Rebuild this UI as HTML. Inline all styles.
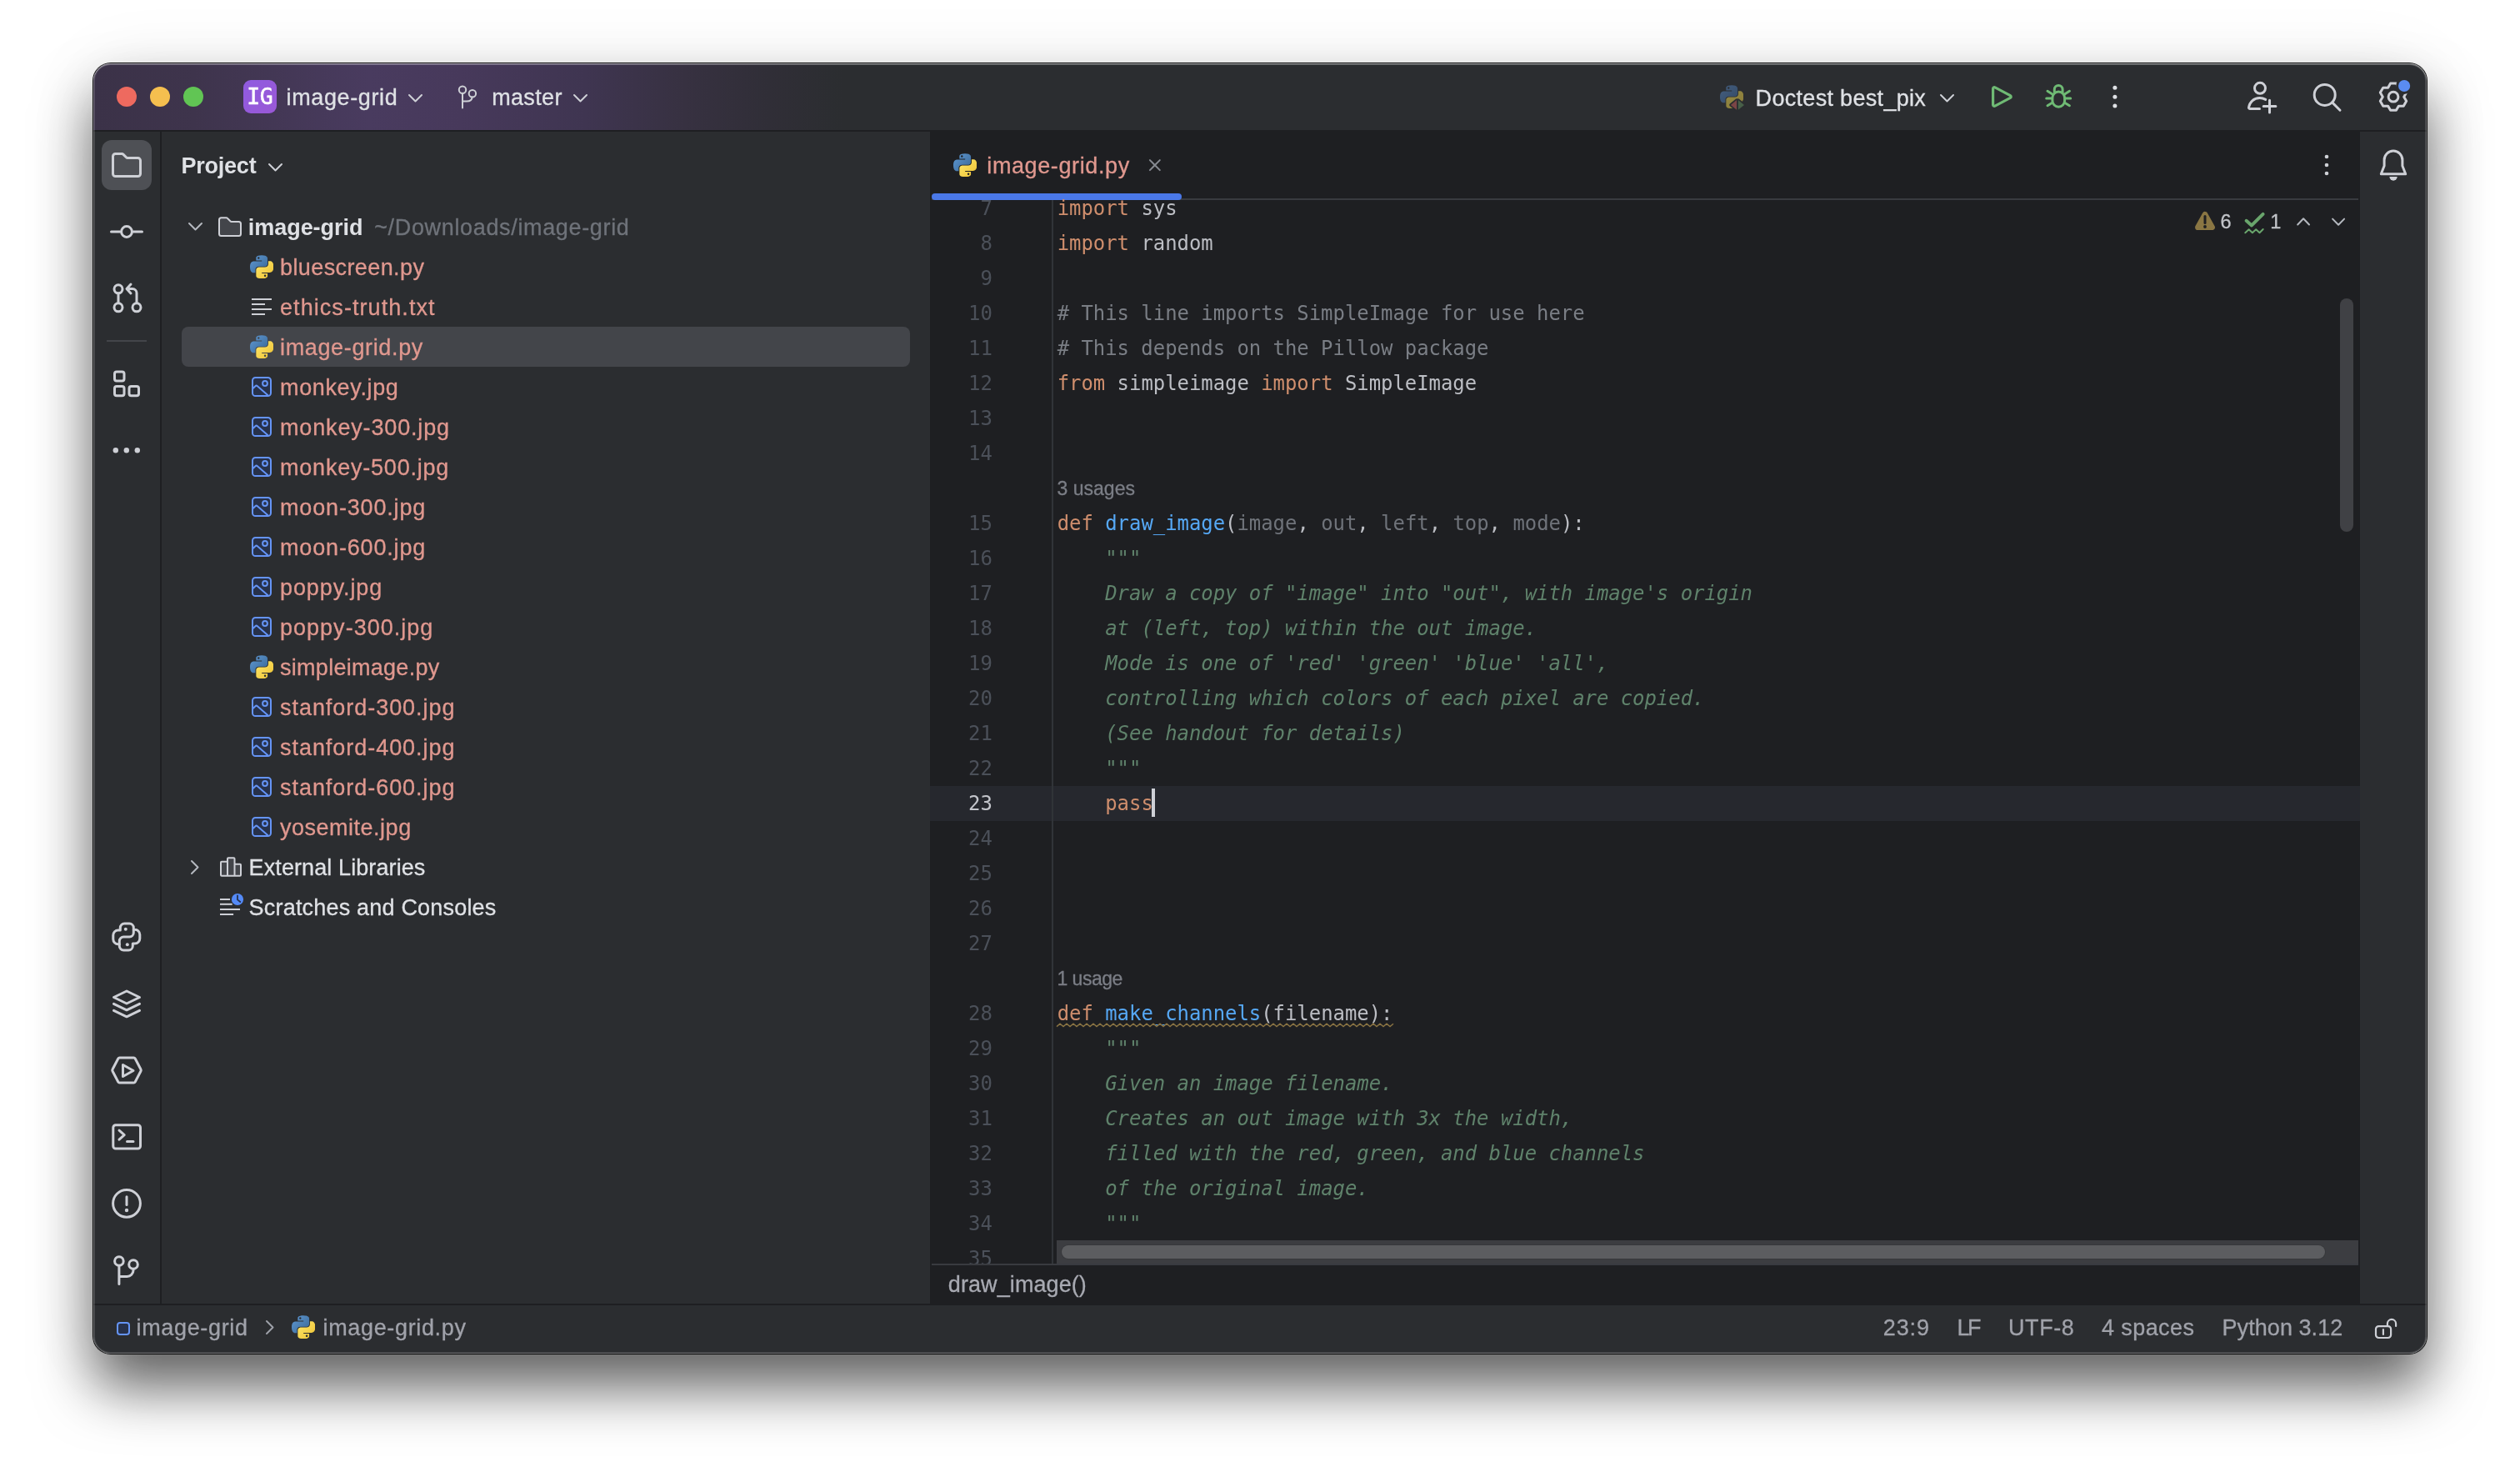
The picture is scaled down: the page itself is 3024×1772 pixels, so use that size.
<!DOCTYPE html>
<html lang="en"><head><meta charset="utf-8"><title>image-grid – image-grid.py</title>
<style>
html,body{margin:0;padding:0;background:#fff;}
body{width:3024px;height:1772px;overflow:hidden;position:relative;font-family:"Liberation Sans",sans-serif;}
#win{position:absolute;left:112px;top:76px;width:2800px;height:1548px;border-radius:21px;overflow:hidden;background:#2b2d30;will-change:transform;}
#shadow{position:absolute;left:112px;top:76px;width:2800px;height:1548px;border-radius:21px;box-shadow:0 0 0 1px rgba(0,0,0,.92),0 41px 68px 0 rgba(0,0,0,.6),0 4px 90px 0 rgba(0,0,0,.07);}
#hl{position:absolute;left:112px;top:76px;width:2800px;height:1548px;border-radius:21px;box-shadow:inset 0 0 0 1px rgba(255,255,255,.25),inset 0 0 0 2px rgba(255,255,255,.09),inset 0 1px 0 0 rgba(255,255,255,.12),inset 0 2px 0 0 rgba(255,255,255,.16);pointer-events:none;}
.t{position:absolute;white-space:pre;line-height:1;-webkit-text-stroke:.3px;}
.cl{position:absolute;white-space:pre;left:1156.7px;height:42px;line-height:42px;font-size:23.9px;font-family:"DejaVu Sans Mono","Liberation Mono",monospace;color:#bcbec4;}
.ln{position:absolute;white-space:pre;left:1005px;width:74px;text-align:right;height:42px;line-height:42px;font-size:24px;font-family:"DejaVu Sans Mono","Liberation Mono",monospace;color:#4b5059;}
.k{color:#cf8e6d}.c{color:#7a7e85}.d{color:#5f826b;font-style:italic}.f{color:#56a8f5}.u{color:#6f737a}
</style></head>
<body>
<div id="shadow"></div>
<div id="win">
<div style="position:absolute;left:0px;top:0px;width:2800px;height:80px;background:linear-gradient(90deg,#3b3248 0px,#3e344c 120px,#493b5f 330px,#47395b 440px,#3f3551 590px,#373141 710px,#302e37 810px,#2b2d30 900px,#2b2d30 100%);"></div>
<div style="position:absolute;left:0px;top:80px;width:2800px;height:2px;background:#1e1f22;"></div>
<div style="position:absolute;left:0px;top:82px;width:80px;height:1406px;background:#2b2d30;"></div>
<div style="position:absolute;left:80px;top:82px;width:2px;height:1406px;background:#1e1f22;"></div>
<div style="position:absolute;left:82px;top:82px;width:922px;height:1406px;background:#2b2d30;"></div>
<div style="position:absolute;left:1004px;top:82px;width:1716px;height:1406px;background:#1e1f22;"></div>
<div style="position:absolute;left:2720px;top:82px;width:80px;height:1406px;background:#2b2d30;"></div>
<div style="position:absolute;left:0px;top:1488px;width:2800px;height:60px;background:#2b2d30;"></div>
<div style="position:absolute;left:0px;top:1488px;width:2800px;height:2px;background:#1e1f22;"></div>
<div style="position:absolute;left:28px;top:28px;width:24px;height:24px;border-radius:50%;background:#ee6a5f;"></div>
<div style="position:absolute;left:68px;top:28px;width:24px;height:24px;border-radius:50%;background:#f5bf4f;"></div>
<div style="position:absolute;left:108px;top:28px;width:24px;height:24px;border-radius:50%;background:#61c554;"></div>
<div style="position:absolute;left:180px;top:20px;width:40px;height:40px;border-radius:9px;background:linear-gradient(135deg,#8f5be0,#9a58d6);"></div>
<span class="t" style="left:184.30px;top:27.25px;font-size:26.5px;color:#ffffff;font-family:'DejaVu Sans Mono','Liberation Mono',monospace;-webkit-text-stroke:.5px;letter-spacing:-.5px;">IG</span>
<span class="t" style="left:231.60px;top:27.50px;font-size:27px;color:#dfe1e5;letter-spacing:0.611px;">image-grid</span>
<span class="t" style="left:478.20px;top:27.50px;font-size:27px;color:#dfe1e5;letter-spacing:0.340px;">master</span>
<span class="t" style="left:1994.60px;top:28.50px;font-size:27px;color:#dfe1e5;letter-spacing:0.312px;">Doctest best_pix</span>
<svg style="position:absolute;left:376.5px;top:35.75px;" width="19" height="11.5" viewBox="0 0 19 11.5" fill="none"><path d="M2 2 L9.5 9.5 L17 2" stroke="#ced0d6" stroke-width="2" stroke-linecap="round" stroke-linejoin="round"/></svg>
<svg style="position:absolute;left:574.5px;top:35.75px;" width="19" height="11.5" viewBox="0 0 19 11.5" fill="none"><path d="M2 2 L9.5 9.5 L17 2" stroke="#ced0d6" stroke-width="2" stroke-linecap="round" stroke-linejoin="round"/></svg>
<svg style="position:absolute;left:2214.5px;top:36.25px;" width="19" height="11.5" viewBox="0 0 19 11.5" fill="none"><path d="M2 2 L9.5 9.5 L17 2" stroke="#ced0d6" stroke-width="2" stroke-linecap="round" stroke-linejoin="round"/></svg>
<span class="t" style="left:105.60px;top:109.50px;font-size:27px;color:#dfe1e5;font-weight:700;-webkit-text-stroke:0;letter-spacing:-0.250px;">Project</span>
<svg style="position:absolute;left:208.5px;top:118.75px;" width="19" height="11.5" viewBox="0 0 19 11.5" fill="none"><path d="M2 2 L9.5 9.5 L17 2" stroke="#ced0d6" stroke-width="2" stroke-linecap="round" stroke-linejoin="round"/></svg>
<div style="position:absolute;left:106px;top:316px;width:874px;height:48px;border-radius:8px;background:#43454a;"></div>
<svg style="position:absolute;left:112.6px;top:190.25px;" width="19" height="11.5" viewBox="0 0 19 11.5" fill="none"><path d="M2 2 L9.5 9.5 L17 2" stroke="#b4b8bf" stroke-width="2" stroke-linecap="round" stroke-linejoin="round"/></svg>
<span class="t" style="left:185.80px;top:183.50px;font-size:27px;color:#dfe1e5;font-weight:700;-webkit-text-stroke:0;letter-spacing:-0.044px;">image-grid</span>
<span class="t" style="left:337.20px;top:183.50px;font-size:27px;color:#6f737a;letter-spacing:0.654px;">~/Downloads/image-grid</span>
<svg width="0" height="0" style="position:absolute"><defs><linearGradient id="pb" x1="0" y1="0" x2="1" y2="1"><stop offset="0" stop-color="#5f9ad6"/><stop offset="1" stop-color="#386592"/></linearGradient><linearGradient id="pyl" x1="0" y1="0" x2="1" y2="1"><stop offset="0" stop-color="#ffe96e"/><stop offset="1" stop-color="#ecc030"/></linearGradient><linearGradient id="pbd" x1="0" y1="0" x2="1" y2="1"><stop offset="0" stop-color="#445f80"/><stop offset="1" stop-color="#344a66"/></linearGradient><linearGradient id="pyd" x1="0" y1="0" x2="1" y2="1"><stop offset="0" stop-color="#938844"/><stop offset="1" stop-color="#8a7c38"/></linearGradient></defs></svg>
<span class="t" style="left:224.00px;top:231.50px;font-size:27px;color:#e0988f;letter-spacing:0.398px;">bluescreen.py</span>
<svg style="position:absolute;left:187.8px;top:229.8px;" width="28.4" height="28.4" viewBox="0 0 110.6 109.6" fill="none"><path fill="url(#pb)" d="M54.9 0C26.8 0 28.6 12.2 28.6 12.2l0 12.6h26.800v3.800H18S0 26.500 0 54.900c0 28.400 15.700 27.400 15.700 27.400h9.400V69.100s-.5-15.700 15.400-15.700h26.600s14.900.2 14.900-14.400V14.900S84.300 0 54.900 0zM40.100 8.500a4.800 4.800 0 1 1 0 9.600 4.800 4.800 0 0 1 0-9.600z"/><path fill="url(#pyl)" d="M55.700 109.600c28.100 0 26.300-12.200 26.300-12.200l0-12.600H55.200V81h37.400s18 2 18-26.300c0-28.400-15.700-27.400-15.700-27.400h-9.400v13.200s.5 15.700-15.400 15.700H43.500s-14.900-.2-14.900 14.400v24.100s-2.300 14.900 27.100 14.900zm14.800-8.500a4.800 4.800 0 1 1 0-9.600 4.800 4.800 0 0 1 0 9.600z"/></svg>
<span class="t" style="left:224.00px;top:279.50px;font-size:27px;color:#e0988f;letter-spacing:1.067px;">ethics-truth.txt</span>
<svg style="position:absolute;left:190px;top:282px;" width="24" height="20" viewBox="0 0 24 20" fill="none"><rect x="0" y="0" width="24" height="2" fill="#ced0d6"/><rect x="0" y="6" width="16" height="2" fill="#ced0d6"/><rect x="0" y="12" width="24" height="2" fill="#ced0d6"/><rect x="0" y="18" width="16" height="2" fill="#ced0d6"/></svg>
<span class="t" style="left:224.00px;top:327.50px;font-size:27px;color:#e0988f;letter-spacing:0.648px;">image-grid.py</span>
<svg style="position:absolute;left:187.8px;top:325.8px;" width="28.4" height="28.4" viewBox="0 0 110.6 109.6" fill="none"><path fill="url(#pb)" d="M54.9 0C26.8 0 28.6 12.2 28.6 12.2l0 12.6h26.800v3.800H18S0 26.500 0 54.900c0 28.400 15.700 27.400 15.700 27.400h9.400V69.100s-.5-15.700 15.400-15.700h26.600s14.900.2 14.900-14.400V14.900S84.300 0 54.900 0zM40.100 8.500a4.800 4.800 0 1 1 0 9.600 4.800 4.800 0 0 1 0-9.600z"/><path fill="url(#pyl)" d="M55.700 109.600c28.100 0 26.300-12.200 26.300-12.200l0-12.600H55.200V81h37.400s18 2 18-26.300c0-28.400-15.700-27.400-15.700-27.400h-9.400v13.200s.5 15.700-15.400 15.700H43.500s-14.900-.2-14.900 14.400v24.100s-2.300 14.900 27.100 14.900zm14.800-8.500a4.800 4.800 0 1 1 0-9.600 4.800 4.800 0 0 1 0 9.600z"/></svg>
<span class="t" style="left:224.00px;top:375.50px;font-size:27px;color:#e0988f;letter-spacing:0.642px;">monkey.jpg</span>
<svg style="position:absolute;left:190px;top:376px;" width="24" height="24" viewBox="0 0 24 24" fill="none"><rect x="1" y="1" width="22" height="22" rx="3.6" fill="#27314a" stroke="#6594f5" stroke-width="2"/><circle cx="16" cy="8" r="2.9" stroke="#6594f5" stroke-width="2"/><path d="M1 14.600 L4.400 11.200 Q5.600 10.100 6.900 11.200 L19.800 22.600" stroke="#6594f5" stroke-width="2" stroke-linejoin="round"/></svg>
<span class="t" style="left:224.00px;top:423.50px;font-size:27px;color:#e0988f;letter-spacing:0.844px;">monkey-300.jpg</span>
<svg style="position:absolute;left:190px;top:424px;" width="24" height="24" viewBox="0 0 24 24" fill="none"><rect x="1" y="1" width="22" height="22" rx="3.6" fill="#27314a" stroke="#6594f5" stroke-width="2"/><circle cx="16" cy="8" r="2.9" stroke="#6594f5" stroke-width="2"/><path d="M1 14.600 L4.400 11.200 Q5.600 10.100 6.900 11.200 L19.800 22.600" stroke="#6594f5" stroke-width="2" stroke-linejoin="round"/></svg>
<span class="t" style="left:224.00px;top:471.50px;font-size:27px;color:#e0988f;letter-spacing:0.790px;">monkey-500.jpg</span>
<svg style="position:absolute;left:190px;top:472px;" width="24" height="24" viewBox="0 0 24 24" fill="none"><rect x="1" y="1" width="22" height="22" rx="3.6" fill="#27314a" stroke="#6594f5" stroke-width="2"/><circle cx="16" cy="8" r="2.9" stroke="#6594f5" stroke-width="2"/><path d="M1 14.600 L4.400 11.200 Q5.600 10.100 6.900 11.200 L19.800 22.600" stroke="#6594f5" stroke-width="2" stroke-linejoin="round"/></svg>
<span class="t" style="left:224.00px;top:519.50px;font-size:27px;color:#e0988f;letter-spacing:0.834px;">moon-300.jpg</span>
<svg style="position:absolute;left:190px;top:520px;" width="24" height="24" viewBox="0 0 24 24" fill="none"><rect x="1" y="1" width="22" height="22" rx="3.6" fill="#27314a" stroke="#6594f5" stroke-width="2"/><circle cx="16" cy="8" r="2.9" stroke="#6594f5" stroke-width="2"/><path d="M1 14.600 L4.400 11.200 Q5.600 10.100 6.900 11.200 L19.800 22.600" stroke="#6594f5" stroke-width="2" stroke-linejoin="round"/></svg>
<span class="t" style="left:224.00px;top:567.50px;font-size:27px;color:#e0988f;letter-spacing:0.834px;">moon-600.jpg</span>
<svg style="position:absolute;left:190px;top:568px;" width="24" height="24" viewBox="0 0 24 24" fill="none"><rect x="1" y="1" width="22" height="22" rx="3.6" fill="#27314a" stroke="#6594f5" stroke-width="2"/><circle cx="16" cy="8" r="2.9" stroke="#6594f5" stroke-width="2"/><path d="M1 14.600 L4.400 11.200 Q5.600 10.100 6.900 11.200 L19.800 22.600" stroke="#6594f5" stroke-width="2" stroke-linejoin="round"/></svg>
<span class="t" style="left:224.00px;top:615.50px;font-size:27px;color:#e0988f;letter-spacing:0.897px;">poppy.jpg</span>
<svg style="position:absolute;left:190px;top:616px;" width="24" height="24" viewBox="0 0 24 24" fill="none"><rect x="1" y="1" width="22" height="22" rx="3.6" fill="#27314a" stroke="#6594f5" stroke-width="2"/><circle cx="16" cy="8" r="2.9" stroke="#6594f5" stroke-width="2"/><path d="M1 14.600 L4.400 11.200 Q5.600 10.100 6.900 11.200 L19.800 22.600" stroke="#6594f5" stroke-width="2" stroke-linejoin="round"/></svg>
<span class="t" style="left:224.00px;top:663.50px;font-size:27px;color:#e0988f;letter-spacing:1.015px;">poppy-300.jpg</span>
<svg style="position:absolute;left:190px;top:664px;" width="24" height="24" viewBox="0 0 24 24" fill="none"><rect x="1" y="1" width="22" height="22" rx="3.6" fill="#27314a" stroke="#6594f5" stroke-width="2"/><circle cx="16" cy="8" r="2.9" stroke="#6594f5" stroke-width="2"/><path d="M1 14.600 L4.400 11.200 Q5.600 10.100 6.900 11.200 L19.800 22.600" stroke="#6594f5" stroke-width="2" stroke-linejoin="round"/></svg>
<span class="t" style="left:224.00px;top:711.50px;font-size:27px;color:#e0988f;letter-spacing:0.283px;">simpleimage.py</span>
<svg style="position:absolute;left:187.8px;top:709.8px;" width="28.4" height="28.4" viewBox="0 0 110.6 109.6" fill="none"><path fill="url(#pb)" d="M54.9 0C26.8 0 28.6 12.2 28.6 12.2l0 12.6h26.800v3.800H18S0 26.500 0 54.900c0 28.400 15.700 27.400 15.700 27.400h9.400V69.100s-.5-15.700 15.400-15.700h26.600s14.900.2 14.900-14.400V14.900S84.300 0 54.900 0zM40.100 8.500a4.800 4.800 0 1 1 0 9.600 4.800 4.800 0 0 1 0-9.600z"/><path fill="url(#pyl)" d="M55.700 109.600c28.100 0 26.300-12.200 26.300-12.200l0-12.600H55.200V81h37.400s18 2 18-26.300c0-28.400-15.700-27.400-15.700-27.400h-9.400v13.200s.5 15.700-15.400 15.700H43.500s-14.900-.2-14.900 14.400v24.100s-2.300 14.900 27.100 14.900zm14.800-8.500a4.800 4.800 0 1 1 0-9.600 4.800 4.800 0 0 1 0 9.600z"/></svg>
<span class="t" style="left:224.00px;top:759.50px;font-size:27px;color:#e0988f;letter-spacing:0.958px;">stanford-300.jpg</span>
<svg style="position:absolute;left:190px;top:760px;" width="24" height="24" viewBox="0 0 24 24" fill="none"><rect x="1" y="1" width="22" height="22" rx="3.6" fill="#27314a" stroke="#6594f5" stroke-width="2"/><circle cx="16" cy="8" r="2.9" stroke="#6594f5" stroke-width="2"/><path d="M1 14.600 L4.400 11.200 Q5.600 10.100 6.900 11.200 L19.800 22.600" stroke="#6594f5" stroke-width="2" stroke-linejoin="round"/></svg>
<span class="t" style="left:224.00px;top:807.50px;font-size:27px;color:#e0988f;letter-spacing:0.958px;">stanford-400.jpg</span>
<svg style="position:absolute;left:190px;top:808px;" width="24" height="24" viewBox="0 0 24 24" fill="none"><rect x="1" y="1" width="22" height="22" rx="3.6" fill="#27314a" stroke="#6594f5" stroke-width="2"/><circle cx="16" cy="8" r="2.9" stroke="#6594f5" stroke-width="2"/><path d="M1 14.600 L4.400 11.200 Q5.600 10.100 6.900 11.200 L19.800 22.600" stroke="#6594f5" stroke-width="2" stroke-linejoin="round"/></svg>
<span class="t" style="left:224.00px;top:855.50px;font-size:27px;color:#e0988f;letter-spacing:0.958px;">stanford-600.jpg</span>
<svg style="position:absolute;left:190px;top:856px;" width="24" height="24" viewBox="0 0 24 24" fill="none"><rect x="1" y="1" width="22" height="22" rx="3.6" fill="#27314a" stroke="#6594f5" stroke-width="2"/><circle cx="16" cy="8" r="2.9" stroke="#6594f5" stroke-width="2"/><path d="M1 14.600 L4.400 11.200 Q5.600 10.100 6.900 11.200 L19.800 22.600" stroke="#6594f5" stroke-width="2" stroke-linejoin="round"/></svg>
<span class="t" style="left:224.00px;top:903.50px;font-size:27px;color:#e0988f;letter-spacing:0.507px;">yosemite.jpg</span>
<svg style="position:absolute;left:190px;top:904px;" width="24" height="24" viewBox="0 0 24 24" fill="none"><rect x="1" y="1" width="22" height="22" rx="3.6" fill="#27314a" stroke="#6594f5" stroke-width="2"/><circle cx="16" cy="8" r="2.9" stroke="#6594f5" stroke-width="2"/><path d="M1 14.600 L4.400 11.200 Q5.600 10.100 6.900 11.200 L19.800 22.600" stroke="#6594f5" stroke-width="2" stroke-linejoin="round"/></svg>
<svg style="position:absolute;left:116.05000000000001px;top:954.5px;" width="11.5" height="19" viewBox="0 0 11.5 19" fill="none"><path d="M2 2 L9.5 9.5 L2 17" stroke="#b4b8bf" stroke-width="2" stroke-linecap="round" stroke-linejoin="round"/></svg>
<span class="t" style="left:186.60px;top:951.50px;font-size:27px;color:#dfe1e5;letter-spacing:0.099px;">External Libraries</span>
<span class="t" style="left:186.60px;top:999.50px;font-size:27px;color:#dfe1e5;letter-spacing:0.194px;">Scratches and Consoles</span>
<div style="position:absolute;left:1006px;top:162px;width:1712px;height:2px;background:#393b40;"></div>
<div style="position:absolute;left:1006px;top:156px;width:300px;height:8px;border-radius:4px;background:#4a78e8;"></div>
<svg style="position:absolute;left:1032px;top:108px;" width="28.4" height="28.4" viewBox="0 0 110.6 109.6" fill="none"><path fill="url(#pb)" d="M54.9 0C26.8 0 28.6 12.2 28.6 12.2l0 12.6h26.800v3.800H18S0 26.500 0 54.900c0 28.400 15.700 27.400 15.700 27.400h9.400V69.100s-.5-15.700 15.400-15.700h26.600s14.900.2 14.900-14.400V14.900S84.300 0 54.900 0zM40.100 8.500a4.800 4.800 0 1 1 0 9.600 4.800 4.800 0 0 1 0-9.600z"/><path fill="url(#pyl)" d="M55.700 109.600c28.100 0 26.300-12.200 26.300-12.200l0-12.600H55.200V81h37.400s18 2 18-26.300c0-28.400-15.700-27.400-15.700-27.400h-9.400v13.200s.5 15.700-15.400 15.700H43.500s-14.900-.2-14.900 14.400v24.100s-2.300 14.900 27.100 14.900zm14.800-8.500a4.800 4.800 0 1 1 0-9.600 4.800 4.800 0 0 1 0 9.600z"/></svg>
<span class="t" style="left:1072.30px;top:109.50px;font-size:27px;color:#e0988f;letter-spacing:0.606px;">image-grid.py</span>
<div style="position:absolute;left:1004px;top:867px;width:1716px;height:42px;background:#26282e;"></div>
<div style="position:absolute;left:1150px;top:164px;width:2px;height:1276px;background:#313438;"></div>
<div class="ln" style="top:153.0px;color:#4b5059">7</div>
<div class="cl" style="top:153.0px"><span class="k">import</span> sys</div>
<div class="ln" style="top:195.0px;color:#4b5059">8</div>
<div class="cl" style="top:195.0px"><span class="k">import</span> random</div>
<div class="ln" style="top:237.0px;color:#4b5059">9</div>
<div class="ln" style="top:279.0px;color:#4b5059">10</div>
<div class="cl" style="top:279.0px"><span class="c"># This line imports SimpleImage for use here</span></div>
<div class="ln" style="top:321.0px;color:#4b5059">11</div>
<div class="cl" style="top:321.0px"><span class="c"># This depends on the Pillow package</span></div>
<div class="ln" style="top:363.0px;color:#4b5059">12</div>
<div class="cl" style="top:363.0px"><span class="k">from</span> simpleimage <span class="k">import</span> SimpleImage</div>
<div class="ln" style="top:405.0px;color:#4b5059">13</div>
<div class="ln" style="top:447.0px;color:#4b5059">14</div>
<span class="t" style="left:1156.40px;top:498.50px;font-size:23px;color:#7b7e86;letter-spacing:0.032px;">3 usages</span>
<div class="ln" style="top:531.0px;color:#4b5059">15</div>
<div class="cl" style="top:531.0px"><span class="k">def</span> <span class="f">draw_image</span>(<span class="u">image</span>, <span class="u">out</span>, <span class="u">left</span>, <span class="u">top</span>, <span class="u">mode</span>):</div>
<div class="ln" style="top:573.0px;color:#4b5059">16</div>
<div class="cl" style="top:573.0px">    <span class="d">"""</span></div>
<div class="ln" style="top:615.0px;color:#4b5059">17</div>
<div class="cl" style="top:615.0px">    <span class="d">Draw a copy of "image" into "out", with image's origin</span></div>
<div class="ln" style="top:657.0px;color:#4b5059">18</div>
<div class="cl" style="top:657.0px">    <span class="d">at (left, top) within the out image.</span></div>
<div class="ln" style="top:699.0px;color:#4b5059">19</div>
<div class="cl" style="top:699.0px">    <span class="d">Mode is one of 'red' 'green' 'blue' 'all',</span></div>
<div class="ln" style="top:741.0px;color:#4b5059">20</div>
<div class="cl" style="top:741.0px">    <span class="d">controlling which colors of each pixel are copied.</span></div>
<div class="ln" style="top:783.0px;color:#4b5059">21</div>
<div class="cl" style="top:783.0px">    <span class="d">(See handout for details)</span></div>
<div class="ln" style="top:825.0px;color:#4b5059">22</div>
<div class="cl" style="top:825.0px">    <span class="d">"""</span></div>
<div class="ln" style="top:867.0px;color:#c3c5cb">23</div>
<div class="cl" style="top:867.0px">    <span class="k">pass</span></div>
<div class="ln" style="top:909.0px;color:#4b5059">24</div>
<div class="ln" style="top:951.0px;color:#4b5059">25</div>
<div class="ln" style="top:993.0px;color:#4b5059">26</div>
<div class="ln" style="top:1035.0px;color:#4b5059">27</div>
<span class="t" style="left:1156.40px;top:1086.50px;font-size:23px;color:#7b7e86;letter-spacing:-0.479px;">1 usage</span>
<div class="ln" style="top:1119.0px;color:#4b5059">28</div>
<div class="cl" style="top:1119.0px"><span class="w"><span class="k">def</span> <span class="f">make_channels</span>(filename):</span></div>
<div class="ln" style="top:1161.0px;color:#4b5059">29</div>
<div class="cl" style="top:1161.0px">    <span class="d">"""</span></div>
<div class="ln" style="top:1203.0px;color:#4b5059">30</div>
<div class="cl" style="top:1203.0px">    <span class="d">Given an image filename.</span></div>
<div class="ln" style="top:1245.0px;color:#4b5059">31</div>
<div class="cl" style="top:1245.0px">    <span class="d">Creates an out image with 3x the width,</span></div>
<div class="ln" style="top:1287.0px;color:#4b5059">32</div>
<div class="cl" style="top:1287.0px">    <span class="d">filled with the red, green, and blue channels</span></div>
<div class="ln" style="top:1329.0px;color:#4b5059">33</div>
<div class="cl" style="top:1329.0px">    <span class="d">of the original image.</span></div>
<div class="ln" style="top:1371.0px;color:#4b5059">34</div>
<div class="cl" style="top:1371.0px">    <span class="d">"""</span></div>
<div class="ln" style="top:1413.0px;color:#4b5059">35</div>
<svg style="position:absolute;left:1148px;top:1144px" width="420" height="20" viewBox="1260 1220 420 20" fill="none"><polyline points="1268.0,1231.6 1272.0,1228.2 1276.0,1231.6 1280.0,1228.2 1284.0,1231.6 1288.0,1228.2 1292.0,1231.6 1296.0,1228.2 1300.0,1231.6 1304.0,1228.2 1308.0,1231.6 1312.0,1228.2 1316.0,1231.6 1320.0,1228.2 1324.0,1231.6 1328.0,1228.2 1332.0,1231.6 1336.0,1228.2 1340.0,1231.6 1344.0,1228.2 1348.0,1231.6 1352.0,1228.2 1356.0,1231.6 1360.0,1228.2 1364.0,1231.6 1368.0,1228.2 1372.0,1231.6 1376.0,1228.2 1380.0,1231.6 1384.0,1228.2 1388.0,1231.6 1392.0,1228.2 1396.0,1231.6 1400.0,1228.2 1404.0,1231.6 1408.0,1228.2 1412.0,1231.6 1416.0,1228.2 1420.0,1231.6 1424.0,1228.2 1428.0,1231.6 1432.0,1228.2 1436.0,1231.6 1440.0,1228.2 1444.0,1231.6 1448.0,1228.2 1452.0,1231.6 1456.0,1228.2 1460.0,1231.6 1464.0,1228.2 1468.0,1231.6 1472.0,1228.2 1476.0,1231.6 1480.0,1228.2 1484.0,1231.6 1488.0,1228.2 1492.0,1231.6 1496.0,1228.2 1500.0,1231.6 1504.0,1228.2 1508.0,1231.6 1512.0,1228.2 1516.0,1231.6 1520.0,1228.2 1524.0,1231.6 1528.0,1228.2 1532.0,1231.6 1536.0,1228.2 1540.0,1231.6 1544.0,1228.2 1548.0,1231.6 1552.0,1228.2 1556.0,1231.6 1560.0,1228.2 1564.0,1231.6 1568.0,1228.2 1572.0,1231.6 1576.0,1228.2 1580.0,1231.6 1584.0,1228.2 1588.0,1231.6 1592.0,1228.2 1596.0,1231.6 1600.0,1228.2 1604.0,1231.6 1608.0,1228.2 1612.0,1231.6 1616.0,1228.2 1620.0,1231.6 1624.0,1228.2 1628.0,1231.6 1632.0,1228.2 1636.0,1231.6 1640.0,1228.2 1644.0,1231.6 1648.0,1228.2 1652.0,1231.6 1656.0,1228.2 1660.0,1231.6 1664.0,1228.2 1668.0,1231.6 1672.0,1228.2" stroke="#8a7443" stroke-width="1.4" stroke-linejoin="miter"/></svg>
<div style="position:absolute;left:1270px;top:870px;width:4px;height:34px;background:#ced0d6;"></div>
<div style="position:absolute;left:2696px;top:282px;width:16px;height:280px;border-radius:8px;background:#404145;"></div>
<div style="position:absolute;left:1156px;top:1412px;width:1562px;height:30px;background:#3c3d41;"></div>
<div style="position:absolute;left:1162px;top:1418px;width:1516px;height:16px;border-radius:8px;background:#5c5d60;box-shadow:0 0 0 1px #37383b;"></div>
<div style="position:absolute;left:1004px;top:1442px;width:1716px;height:46px;background:#1e1f22;"></div>
<div style="position:absolute;left:1006px;top:1440px;width:1712px;height:2px;background:#393b40;"></div>
<span class="t" style="left:1025.80px;top:1451.50px;font-size:27px;color:#a8aab2;letter-spacing:0.091px;">draw_image()</span>
<span class="t" style="left:51.60px;top:1503.50px;font-size:27px;color:#a0a2aa;letter-spacing:0.644px;">image-grid</span>
<span class="t" style="left:275.50px;top:1503.50px;font-size:27px;color:#a0a2aa;letter-spacing:0.656px;">image-grid.py</span>
<span class="t" style="left:2147.80px;top:1503.50px;font-size:27px;color:#a0a2aa;letter-spacing:0.867px;">23:9</span>
<span class="t" style="left:2236.50px;top:1503.50px;font-size:27px;color:#a0a2aa;letter-spacing:-2.600px;">LF</span>
<span class="t" style="left:2298.00px;top:1503.50px;font-size:27px;color:#a0a2aa;letter-spacing:0.575px;">UTF-8</span>
<span class="t" style="left:2410.00px;top:1503.50px;font-size:27px;color:#a0a2aa;letter-spacing:0.411px;">4 spaces</span>
<span class="t" style="left:2554.50px;top:1503.50px;font-size:27px;color:#a0a2aa;letter-spacing:0.068px;">Python 3.12</span>
<svg style="position:absolute;left:238px;top:1502px;" width="28.4" height="28.4" viewBox="0 0 110.6 109.6" fill="none"><path fill="url(#pb)" d="M54.9 0C26.8 0 28.6 12.2 28.6 12.2l0 12.6h26.800v3.800H18S0 26.500 0 54.900c0 28.400 15.700 27.400 15.700 27.400h9.400V69.100s-.5-15.700 15.400-15.700h26.600s14.900.2 14.900-14.400V14.900S84.300 0 54.900 0zM40.100 8.500a4.800 4.800 0 1 1 0 9.600 4.800 4.800 0 0 1 0-9.600z"/><path fill="url(#pyl)" d="M55.700 109.600c28.100 0 26.300-12.200 26.300-12.200l0-12.600H55.200V81h37.400s18 2 18-26.300c0-28.400-15.700-27.400-15.700-27.400h-9.400v13.200s.5 15.700-15.400 15.700H43.500s-14.900-.2-14.900 14.400v24.100s-2.300 14.900 27.100 14.900zm14.800-8.500a4.800 4.800 0 1 1 0-9.600 4.800 4.800 0 0 1 0 9.600z"/></svg>
<svg style="position:absolute;left:206.25px;top:1507.0px;" width="11.5" height="19" viewBox="0 0 11.5 19" fill="none"><path d="M2 2 L9.5 9.5 L2 17" stroke="#9da0a8" stroke-width="2" stroke-linecap="round" stroke-linejoin="round"/></svg>
<div style="position:absolute;left:28px;top:1510px;width:16px;height:16px;border-radius:4px;border:2px solid #6594f5;background:#27314a;box-sizing:border-box;"></div>
<div style="position:absolute;left:10px;top:92px;width:60px;height:60px;border-radius:12px;background:#4e5055;"></div>
<svg style="position:absolute;left:0px;top:82px" width="80" height="1406" viewBox="112 158 80 1406" fill="none"><path d="M138.5 184.5 H146.4 a2 2 0 0 1 1.4 .6 L152 189.3 a1 1 0 0 0 .7 .3 H165.5 a3 3 0 0 1 3 3 V208.5 a3 3 0 0 1 -3 3 H138.5 a3 3 0 0 1 -3 -3 V187.500 a3 3 0 0 1 3 -3 Z" stroke="#ced0d6" stroke-width="3" fill="none" stroke-linecap="round" stroke-linejoin="round" /><path d="M133.5 278 H144 M160 278 H170.500" stroke="#ced0d6" stroke-width="3" fill="none" stroke-linecap="round" stroke-linejoin="round" /><circle cx="152" cy="278" r="6.4" stroke="#ced0d6" stroke-width="3"/><circle cx="142" cy="346.8" r="5" stroke="#ced0d6" stroke-width="3"/><circle cx="142" cy="368.800" r="5" stroke="#ced0d6" stroke-width="3"/><circle cx="164" cy="368.800" r="5" stroke="#ced0d6" stroke-width="3"/><path d="M142 352.300 V363.3 M164 363.300 V351.5 a5 5 0 0 0 -5 -5 H152.5 M157 341 L152 346.500 L157 352" stroke="#ced0d6" stroke-width="3" fill="none" stroke-linecap="round" stroke-linejoin="round" /><rect x="128" y="408" width="48" height="2" fill="#43454a"/><rect x="137.5" y="445.9" width="11.5" height="11.200" rx="2.5" stroke="#ced0d6" stroke-width="3"/><rect x="137.5" y="463.5" width="11.5" height="11.200" rx="2.5" stroke="#ced0d6" stroke-width="3"/><rect x="155" y="463.5" width="11.5" height="11.200" rx="2.5" stroke="#ced0d6" stroke-width="3"/><circle cx="138.8" cy="540.3" r="3.2" fill="#ced0d6"/><circle cx="151.8" cy="540.3" r="3.2" fill="#ced0d6"/><circle cx="164.8" cy="540.3" r="3.2" fill="#ced0d6"/><g transform="translate(151.8 1124)"><path d="M-7.5 -8 V-11 A5 5 0 0 1 -2.500 -16 H3.5 A5 5 0 0 1 8.500 -11 V-8.8 H10 A6 6 0 0 1 16 -2.800 V2 A6 6 0 0 1 10 8 H7.500 V11 A5 5 0 0 1 2.500 16 H-3.5 A5 5 0 0 1 -8.500 11 V8.800 H-10 A6 6 0 0 1 -16 2.800 V-2 A6 6 0 0 1 -10 -8 Z" stroke="#ced0d6" stroke-width="3" fill="none" stroke-linecap="round" stroke-linejoin="round" /><path d="M8.5 -8.8 V-5 A5 5 0 0 1 3.500 0 H-3.5 A5 5 0 0 0 -8.500 5 V8.800" stroke="#ced0d6" stroke-width="3" fill="none" stroke-linecap="round" stroke-linejoin="round" /><circle cx="-1" cy="-9.2" r="2" fill="#ced0d6"/><circle cx="1" cy="9.200" r="2" fill="#ced0d6"/></g><path d="M136.5 1196.5 L152 1189 L167.500 1196.500 L152 1204 Z M136.500 1204.300 L152 1211.800 L167.500 1204.300 M136.500 1212.300 L152 1219.800 L167.500 1212.300" stroke="#ced0d6" stroke-width="3" fill="none" stroke-linecap="round" stroke-linejoin="round" /><path d="M143.5 1269 H160.5 a2 2 0 0 1 1.700 1 L169 1283 a2 2 0 0 1 0 2 L162.200 1298 a2 2 0 0 1 -1.700 1 H143.500 a2 2 0 0 1 -1.700 -1 L135 1285 a2 2 0 0 1 0 -2 L141.800 1270 a2 2 0 0 1 1.700 -1 Z" stroke="#ced0d6" stroke-width="3" fill="none" stroke-linecap="round" stroke-linejoin="round" /><path d="M147.5 1277.5 V1291.5 L160 1284.500 Z" stroke="#ced0d6" stroke-width="3" fill="none" stroke-linecap="round" stroke-linejoin="round" /><rect x="135.8" y="1349.7" width="32.7" height="28.300" rx="3" stroke="#ced0d6" stroke-width="3"/><path d="M143 1356.2 L149.2 1361.7 L143 1367.200 M152.500 1369.500 H160" stroke="#ced0d6" stroke-width="3" fill="none" stroke-linecap="round" stroke-linejoin="round" /><circle cx="152" cy="1443.8" r="16.4" stroke="#ced0d6" stroke-width="3"/><path d="M152 1435.7 V1445.5" stroke="#ced0d6" stroke-width="3" fill="none" stroke-linecap="round" stroke-linejoin="round" /><circle cx="152" cy="1452" r="2.200" fill="#ced0d6"/><circle cx="142.9" cy="1513" r="5.3" stroke="#ced0d6" stroke-width="3"/><circle cx="160" cy="1517" r="5.300" stroke="#ced0d6" stroke-width="3"/><path d="M142.9 1518.6 V1540.5 M160 1522.600 V1524 a7.500 7.500 0 0 1 -7.500 7.500 H143" stroke="#ced0d6" stroke-width="3" fill="none" stroke-linecap="round" stroke-linejoin="round" /></svg>
<svg style="position:absolute;left:428px;top:20px" width="40" height="40" viewBox="540 96 40 40" fill="none"><circle cx="555" cy="107.8" r="4.2" stroke="#ced0d6" stroke-width="2"/><circle cx="566.900" cy="112.200" r="4.200" stroke="#ced0d6" stroke-width="2"/><path d="M555 112.2 V129.5 M566.5 116.500 C566.500 120 563.500 121.600 560 121.600 H555.200" stroke="#ced0d6" stroke-width="2" fill="none" stroke-linecap="round" stroke-linejoin="round" /></svg>
<svg style="position:absolute;left:1952px;top:26px;" width="28.4" height="28.4" viewBox="0 0 110.6 109.6" fill="none"><path fill="url(#pbd)" d="M54.9 0C26.8 0 28.6 12.2 28.6 12.2l0 12.6h26.800v3.800H18S0 26.500 0 54.900c0 28.400 15.700 27.400 15.700 27.400h9.400V69.100s-.5-15.700 15.400-15.700h26.600s14.900.2 14.900-14.400V14.900S84.300 0 54.900 0zM40.100 8.500a4.800 4.800 0 1 1 0 9.600 4.800 4.800 0 0 1 0-9.600z"/><path fill="url(#pyd)" d="M55.700 109.600c28.100 0 26.300-12.200 26.300-12.200l0-12.600H55.200V81h37.400s18 2 18-26.300c0-28.400-15.700-27.400-15.700-27.400h-9.400v13.200s.5 15.700-15.400 15.700H43.500s-14.900-.2-14.900 14.400v24.100s-2.300 14.900 27.100 14.900zm14.800-8.500a4.800 4.800 0 1 1 0-9.600 4.800 4.800 0 0 1 0 9.600z"/></svg>
<svg style="position:absolute;left:1948px;top:24px" width="40" height="38" viewBox="2060 100 40 38" fill="none"><path d="M2084 120.100 V131.8 L2076.900 125.900 Z M2085.800 120.100 V131.800 L2093 125.900 Z" fill="#2b2d30" stroke="#2b2d30" stroke-width="3.4" stroke-linejoin="round"/><path d="M2084 120.100 V131.8 L2076.900 125.900 Z" fill="#7b4546"/><path d="M2085.800 120.100 V131.800 L2093 125.900 Z" fill="#475f48"/></svg>
<svg style="position:absolute;left:2268px;top:14px" width="532" height="60" viewBox="2380 90 532 60" fill="none"><path d="M2391.6 106.300 V125.7 a1.600 1.600 0 0 0 2.400 1.400 L2412.400 117.400 a1.600 1.600 0 0 0 0 -2.800 L2394 104.900 a1.600 1.600 0 0 0 -2.400 1.400 Z" stroke="#6fba74" stroke-width="3.2" fill="none" stroke-linecap="round" stroke-linejoin="round" /><rect x="2462.9" y="110.1" width="14.7" height="18.100" rx="7.3" stroke="#6fba74" stroke-width="3"/><path d="M2465.3 110.500 V107.3 a4.900 4.900 0 0 1 9.800 0 V110.500 M2457 109.300 L2462.500 112.700 M2483.400 109.300 L2477.900 112.700 M2455.700 118 H2462 M2484.700 118 H2478.400 M2457 126.700 L2462.800 123.200 M2483.400 126.700 L2477.600 123.200" stroke="#6fba74" stroke-width="3" fill="none" stroke-linecap="round" stroke-linejoin="round" /><circle cx="2537.9" cy="105.3" r="2.5" fill="#dfe1e5"/><circle cx="2537.9" cy="116.2" r="2.5" fill="#dfe1e5"/><circle cx="2537.9" cy="127.1" r="2.5" fill="#dfe1e5"/><circle cx="2712" cy="105.8" r="6.5" stroke="#ced0d6" stroke-width="3"/><path d="M2711.5 130.600 H2700 a1.500 1.500 0 0 1 -1.500 -1.700 C2699.500 122.500 2704.500 117.500 2711.600 117.500 C2714.400 117.500 2716.700 118.200 2718.700 119.400 M2723.500 120.200 V135 M2716.200 127.600 H2730.900" stroke="#ced0d6" stroke-width="3" fill="none" stroke-linecap="round" stroke-linejoin="round" /><circle cx="2789.7" cy="113.9" r="12.5" stroke="#ced0d6" stroke-width="3"/><path d="M2798.7 122.900 L2808 132.200" stroke="#ced0d6" stroke-width="3" fill="none" stroke-linecap="round" stroke-linejoin="round" /><mask id="gm" maskUnits="userSpaceOnUse" x="2840" y="90" width="70" height="60"><rect x="2840" y="90" width="70" height="60" fill="#fff"/><circle cx="2885.1" cy="103" r="10" fill="#000"/></mask><g mask="url(#gm)"><path d="M2875.43 100.06 L2868.57 100.06 L2865.65 105.20 L2859.74 105.16 L2856.31 111.10 L2859.30 116.20 L2856.31 121.30 L2859.74 127.24 L2865.65 127.20 L2868.57 132.34 L2875.43 132.34 L2878.35 127.20 L2884.26 127.24 L2887.69 121.30 L2884.70 116.20 L2887.69 111.10 L2884.26 105.16 L2878.35 105.20 Z" stroke="#ced0d6" stroke-width="3" fill="none" stroke-linecap="round" stroke-linejoin="round" /><circle cx="2872" cy="116.200" r="5.9" stroke="#ced0d6" stroke-width="3"/></g><circle cx="2885.1" cy="103" r="7.1" fill="#5a8cf2"/></svg>
<svg style="position:absolute;left:143px;top:179px" width="45" height="850" viewBox="255 255 45 850" fill="none"><path d="M265.5 261.2 H271.7 a1.500 1.500 0 0 1 1.100 .5 L276.600 265.500 a1.500 1.500 0 0 0 1.100 .5 H286.500 a2.500 2.500 0 0 1 2.500 2.500 V280.500 a2.500 2.500 0 0 1 -2.500 2.500 H265.500 a2.500 2.500 0 0 1 -2.500 -2.500 V263.700 a2.500 2.500 0 0 1 2.500 -2.500 Z" stroke="#ced0d6" stroke-width="2" fill="#43454a" stroke-linecap="round" stroke-linejoin="round" /><path d="M265 1034.700 a1 1 0 0 1 1 -1 H273 V1050.700 H266 a1 1 0 0 1 -1 -1 Z M273 1030.200 a1 1 0 0 1 1 -1 H280.500 a1 1 0 0 1 1 1 V1050.700 H273 Z M281.500 1036.800 H288 a1 1 0 0 1 1 1 V1049.700 a1 1 0 0 1 -1 1 H281.500 Z" stroke="#ced0d6" stroke-width="2" fill="#43454a" stroke-linecap="round" stroke-linejoin="round" /><rect x="264" y="1078" width="12" height="2" fill="#ced0d6"/><rect x="264" y="1083.8" width="14.699999999999989" height="2" fill="#ced0d6"/><rect x="264" y="1090" width="24" height="2" fill="#ced0d6"/><rect x="264" y="1096" width="16.100000000000023" height="2" fill="#ced0d6"/><circle cx="285" cy="1079" r="7.1" fill="#548af7"/><path d="M285 1074.500 V1079.4 L288.300 1082" stroke="#25324d" stroke-width="1.8" fill="none" stroke-linecap="round" stroke-linejoin="round" /></svg>
<svg style="position:absolute;left:1258px;top:84px" width="1542" height="140" viewBox="1370 160 1542 140" fill="none"><path d="M1379.9 192.100 L1391.8 204.100 M1391.800 192.100 L1379.900 204.100" stroke="#868a91" stroke-width="2" fill="none" stroke-linecap="round" stroke-linejoin="round" /><circle cx="2792" cy="188" r="2.3" fill="#ced0d6"/><circle cx="2792" cy="198" r="2.3" fill="#ced0d6"/><circle cx="2792" cy="208" r="2.3" fill="#ced0d6"/><path d="M2857.3 208.800 L2861.1 199 V192 a10.900 10.900 0 0 1 21.800 0 V199 L2886.700 208.800 Z" stroke="#ced0d6" stroke-width="3" fill="none" stroke-linecap="round" stroke-linejoin="round" /><path d="M2867.4 212 H2876.7 A4.650 4.650 0 0 1 2867.400 212 Z" fill="#ced0d6"/><path d="M2646 257.300 L2654.500 272.700 H2637.500 Z" fill="#8a7643" stroke="#8a7643" stroke-width="6.8" stroke-linejoin="round"/><path d="M2646 259.500 V267.500" stroke="#1e1f22" stroke-width="3" fill="none" stroke-linecap="round" stroke-linejoin="round" /><circle cx="2646" cy="272" r="1.9" fill="#1e1f22"/><path d="M2695.6 264.800 L2702 270.400 L2715.600 256.800" stroke="#69a56c" stroke-width="4" fill="none" stroke-linecap="round" stroke-linejoin="round" /><path d="M2694.3 279.300 L2698.600 275.200 L2702.900 279.300 L2707.200 275.200 L2711.500 279.300 L2715.700 275" stroke="#69a56c" stroke-width="2" fill="none" stroke-linecap="round" stroke-linejoin="round" /><path d="M2757.2 269.500 L2764.1 262.300 L2771 269.500 M2799.100 262.600 L2806.100 269.800 L2813.100 262.600" stroke="#b4b8bf" stroke-width="2" fill="none" stroke-linecap="round" stroke-linejoin="round" /></svg>
<span class="t" style="left:2552.40px;top:179.25px;font-size:23.5px;color:#c1c3c8;">6</span>
<span class="t" style="left:2612.30px;top:179.25px;font-size:23.5px;color:#c1c3c8;">1</span>
<svg style="position:absolute;left:2728px;top:1499px" width="50" height="40" viewBox="2840 1575 50 40" fill="none"><rect x="2851" y="1591.1" width="18.1" height="13.900" rx="3.5" stroke="#ced0d6" stroke-width="2.200"/><path d="M2859.900 1595.200 V1600.900 M2864.900 1590 V1588 a5.100 5.100 0 0 1 10.200 0 V1591" stroke="#ced0d6" stroke-width="2.2" fill="none" stroke-linecap="round" stroke-linejoin="round" /></svg>
</div>
<div id="hl"></div>
</body></html>
